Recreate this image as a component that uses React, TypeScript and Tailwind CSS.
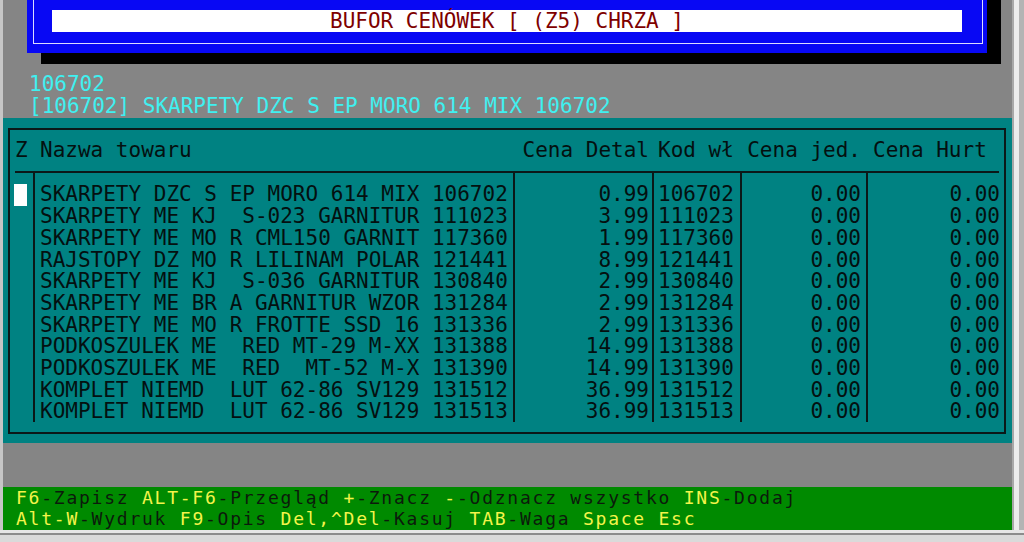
import React from "react";

type Row = {
  name: string;
  detal: string;
  kod: string;
  jed: string;
  hurt: string;
};

const rows: Row[] = [
  { name: "SKARPETY DZC S EP MORO 614 MIX 106702", detal: "0.99", kod: "106702", jed: "0.00", hurt: "0.00" },
  { name: "SKARPETY ME KJ  S-023 GARNITUR 111023", detal: "3.99", kod: "111023", jed: "0.00", hurt: "0.00" },
  { name: "SKARPETY ME MO R CML150 GARNIT 117360", detal: "1.99", kod: "117360", jed: "0.00", hurt: "0.00" },
  { name: "RAJSTOPY DZ MO R LILINAM POLAR 121441", detal: "8.99", kod: "121441", jed: "0.00", hurt: "0.00" },
  { name: "SKARPETY ME KJ  S-036 GARNITUR 130840", detal: "2.99", kod: "130840", jed: "0.00", hurt: "0.00" },
  { name: "SKARPETY ME BR A GARNITUR WZOR 131284", detal: "2.99", kod: "131284", jed: "0.00", hurt: "0.00" },
  { name: "SKARPETY ME MO R FROTTE SSD 16 131336", detal: "2.99", kod: "131336", jed: "0.00", hurt: "0.00" },
  { name: "PODKOSZULEK ME  RED MT-29 M-XX 131388", detal: "14.99", kod: "131388", jed: "0.00", hurt: "0.00" },
  { name: "PODKOSZULEK ME  RED  MT-52 M-X 131390", detal: "14.99", kod: "131390", jed: "0.00", hurt: "0.00" },
  { name: "KOMPLET NIEMD  LUT 62-86 SV129 131512", detal: "36.99", kod: "131512", jed: "0.00", hurt: "0.00" },
  { name: "KOMPLET NIEMD  LUT 62-86 SV129 131513", detal: "36.99", kod: "131513", jed: "0.00", hurt: "0.00" },
];

// key (yellow) + label (dark) pairs for the hint bar
const hints1: [string, string][] = [
  ["F6", "-Zapisz "],
  ["ALT-F6", "-Przegląd "],
  ["+", "-Znacz "],
  ["-", "-Odznacz wszystko "],
  ["INS", "-Dodaj"],
];
const hints2: [string, string][] = [
  ["Alt-W", "-Wydruk "],
  ["F9", "-Opis "],
  ["Del,^Del", "-Kasuj "],
  ["TAB", "-Waga "],
  ["Space Esc", ""],
];

const Cell = ({ children }: { children?: React.ReactNode }) => (
  <div className="h-[21.7px] leading-[25px] whitespace-pre">{children}</div>
);

const HintLine = ({ items }: { items: [string, string][] }) => (
  <div className="h-[21.5px] flex pl-[13px] leading-[21.5px] whitespace-pre text-[18px] tracking-[1.76px]">
    {items.map(([k, l], i) => (
      <React.Fragment key={i}>
        <div className="text-[#f4f44a]">{k}</div>
        {l && <div className="text-[#0c1a0c]">{l}</div>}
      </React.Fragment>
    ))}
  </div>
);

export default function App() {
  return (
    <div className="w-[1024px] h-[542px] overflow-hidden flex flex-col bg-[#d4d4d4] font-['DejaVu_Sans_Mono',monospace] text-[21px]">
      <div className="flex h-[530px]">
        <div className="w-[3px] bg-[#c6c6c6]" />

        <div className="w-[1009px] flex flex-col bg-[#858585]">
          {/* title window */}
          <div className="h-[53px] flex items-end">
            <div className="ml-[24px] w-[960px] h-[73px] shrink-0 bg-[#0808f4] shadow-[14px_11px_0_#000] pl-[6px] pr-[4px] pb-[9px] flex">
              <div className="flex-1 border-x border-b border-[#dcdcff] pt-[30px] pl-[18px] pr-[20px]">
                <div className="h-[22px] bg-white text-center leading-[22px] text-[#7e0000] whitespace-pre">
                  BUFOR CENÓWEK [ (Z5) CHRZA ]
                </div>
              </div>
            </div>
          </div>

          {/* current item info */}
          <div className="mt-[21.3px] pl-[26px] text-[#3ff0f0] leading-[21.7px] whitespace-pre">
            <div className="h-[21.7px]">106702</div>
            <div className="h-[21.7px]">[106702] SKARPETY DZC S EP MORO 614 MIX 106702</div>
          </div>

          {/* table panel */}
          <div className="h-[325px] bg-[#008282] pt-[10px] pl-[5px] pr-[6px] text-[#041010]">
            <div className="h-[306px] border-2 border-[#0b1818] flex flex-col">
              {/* header */}
              <div className="h-[41px] pt-[9px] flex leading-[23px] whitespace-pre">
                <div className="w-[23px] pl-[5px]">Z</div>
                <div className="w-[480px] pl-[7px]">Nazwa towaru</div>
                <div className="w-[139px] pr-[3px] text-right">Cena Detal</div>
                <div className="w-[88px] pl-[6px]">Kod wł</div>
                <div className="w-[126px] pr-[5px] text-right">Cena jed.</div>
                <div className="flex-1 pl-[7px]">Cena Hurt</div>
              </div>
              <div className="h-[2px] ml-[5px] mr-[5px] bg-[#0b1818]" />

              {/* body */}
              <div className="flex h-[249px]">
                <div className="w-[23px] pt-[10px]">
                  <div className="ml-[4px] mt-[1px] w-[13px] h-[22px] bg-white" />
                </div>
                <div className="w-[480px] border-l-2 border-[#0b1818] pt-[9.8px] pl-[5px]">
                  {rows.map((r) => (
                    <Cell key={r.kod}>{r.name}</Cell>
                  ))}
                </div>
                <div className="w-[139px] border-l-2 border-[#0b1818] pt-[9.8px] pr-[3px] text-right">
                  {rows.map((r) => (
                    <Cell key={r.kod}>{r.detal}</Cell>
                  ))}
                </div>
                <div className="w-[88px] border-l-2 border-[#0b1818] pt-[9.8px] pl-[4px]">
                  {rows.map((r) => (
                    <Cell key={r.kod}>{r.kod}</Cell>
                  ))}
                </div>
                <div className="w-[126px] border-l-2 border-[#0b1818] pt-[9.8px] pr-[5px] text-right">
                  {rows.map((r) => (
                    <Cell key={r.kod}>{r.jed}</Cell>
                  ))}
                </div>
                <div className="flex-1 border-l-2 border-[#0b1818] pt-[9.8px] pr-[4px] text-right">
                  {rows.map((r) => (
                    <Cell key={r.kod}>{r.hurt}</Cell>
                  ))}
                </div>
              </div>
            </div>
          </div>

          <div className="h-[44px]" />

          {/* hint bar */}
          <div className="h-[43px] bg-[#008a00]">
            <HintLine items={hints1} />
            <HintLine items={hints2} />
          </div>
        </div>

        {/* window frame, right */}
        <div className="w-[12px] flex">
          <div className="w-[2px] bg-[#a8a8a8]" />
          <div className="w-[5px] bg-[#ececec]" />
          <div className="flex-1 bg-[#b4b4b4]" />
        </div>
      </div>

      {/* window frame, bottom */}
      <div className="h-[12px] flex flex-col">
        <div className="h-[3px] bg-[#e6e6e6]" />
        <div className="h-[2px] bg-[#8c8c8c]" />
        <div className="flex-1 bg-[#dadada]" />
      </div>
    </div>
  );
}
